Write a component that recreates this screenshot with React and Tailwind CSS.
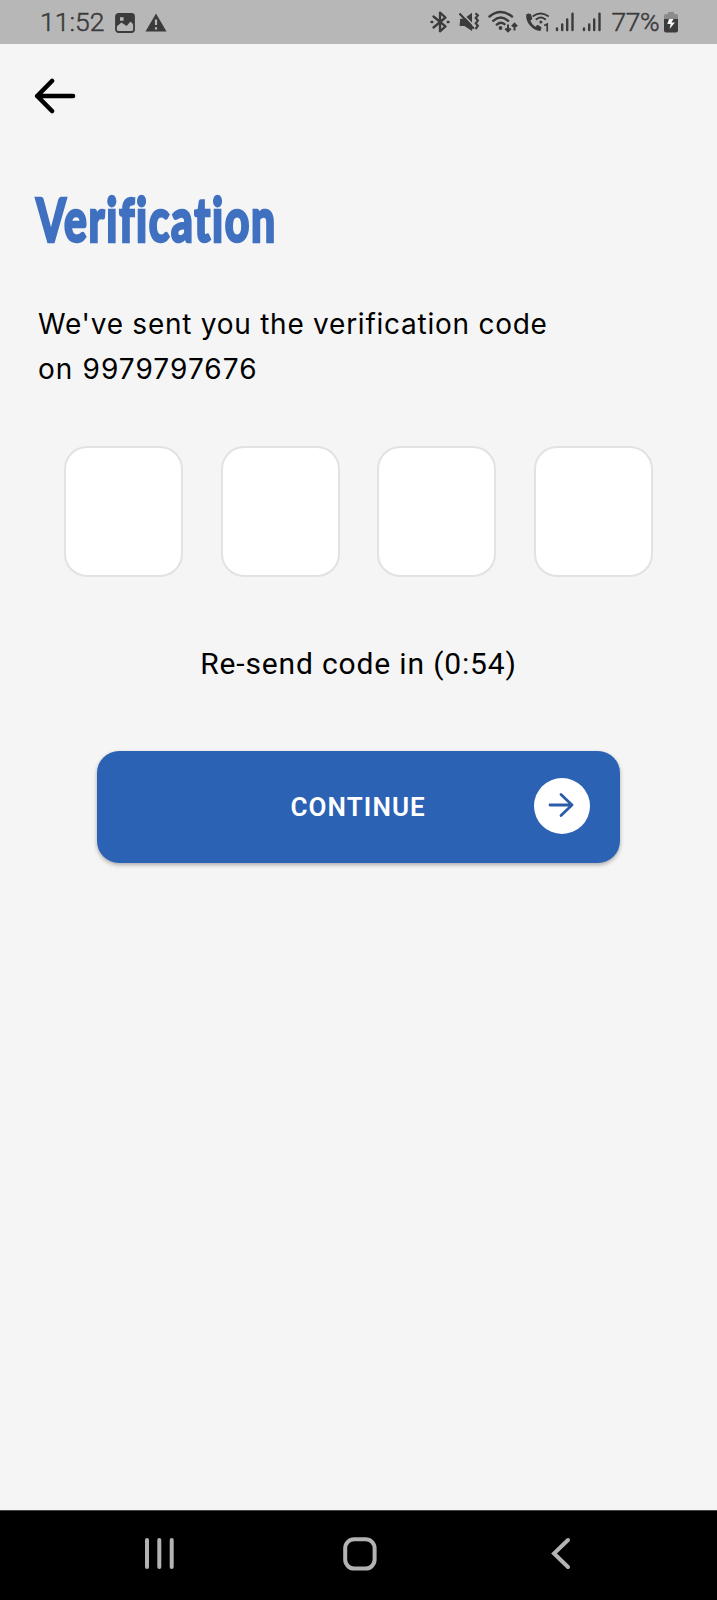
import React from 'react';

const SignalIcon = ({ className }) => (
    <svg viewBox="0 0 20 20" className={className} stroke="#3b3b3b" strokeWidth="2.4" strokeLinecap="round">
        <path d="M2 18v-1.5M7.2 18v-5.5M12.2 18V7.5M17.5 18V1.8" />
    </svg>
);

const StatusBar = () => (
    <div className="h-11 bg-[#b7b7b7] text-[#3b3b3b] flex items-start pl-[40px] font-[Roboto,sans-serif] shrink-0">
        <span className="w-[75px] pt-[2px] text-[26.5px] leading-10 whitespace-nowrap font-light [-webkit-text-stroke:0.5px_#3b3b3b]">11:52</span>
        <svg viewBox="0 0 20 20" className="w-5 h-5 mt-[12.5px]">
            <rect x="1" y="1" width="18" height="18" rx="2.5" fill="none" stroke="#3b3b3b" strokeWidth="1.8" />
            <path fillRule="evenodd" fill="#3b3b3b" d="M1 3Q1 1 3 1H17Q19 1 19 3V12L15.5 8.5L11.5 13L6.5 9.5L1 14ZM5 4.2V7.8H8.6V4.2Z" />
        </svg>
        <svg viewBox="0 0 22 19" className="w-[22px] h-[19px] mt-[12.5px] ml-[10px]">
            <path d="M11 .5L21.5 18.5H.5Z" fill="#3b3b3b" />
            <path d="M11 6.5V12M11 14.2V16.5" stroke="#b7b7b7" strokeWidth="2.2" />
        </svg>

        <svg viewBox="0 0 20 22" className="w-5 h-[22px] mt-[11px] ml-[263px]" fill="none" stroke="#3b3b3b" strokeWidth="2.3" strokeLinejoin="round" strokeLinecap="round">
            <path d="M3.5 5.5L15.5 15.3L10 20.3V1.7L15.5 6.5L3.5 16.5" />
            <path d="M1.6 11h.6M17.8 11h.6" strokeWidth="2.6" />
        </svg>
        <svg viewBox="0 0 21 20" className="w-[21px] h-5 mt-3 ml-[8.5px]">
            <path d="M1.2 6.7H5L13 .8V19L5.5 14H.6Z" fill="#3b3b3b" />
            <path d="M1.8 0L17 16" stroke="#b7b7b7" strokeWidth="1.6" />
            <path d="M.5 1.5L14.8 16.8" stroke="#3b3b3b" strokeWidth="2.1" />
            <path d="M16.5 1.2l2.4 2.2-2.2 2.6 2.2 2.6-2.2 2.6 2.2 2.6-2.4 3.2" stroke="#3b3b3b" strokeWidth="2.1" fill="none" />
        </svg>
        <svg viewBox="0 0 30 23" className="w-[30px] h-[23px] mt-[10px] ml-2" fill="none" stroke="#3b3b3b" strokeWidth="2.4" strokeLinecap="round">
            <path d="M1.5 6.5Q12.5-2.5 24 6.5M5.2 10.8Q12.7 4.2 20.2 10.8M8.8 14.6Q12.7 11 16.5 14.2" />
            <circle cx="12.5" cy="18" r="1.9" fill="#3b3b3b" stroke="none" />
            <path d="M20 14.5V21M17.3 18.5l2.7 2.8 2.7-2.8M26.5 20.5V14M23.9 16.4l2.6-2.7 2.6 2.7" strokeWidth="2" strokeLinecap="butt" />
        </svg>
        <svg viewBox="0 0 25 22" className="w-[25px] h-[22px] mt-[11px] ml-[7.5px]" fill="none" stroke="#3b3b3b">
            <path d="M1.2 3.5Q.5 9.5 5 14.5T15.3 20Q16.8 18.5 16.3 16L12.5 13.7L10.3 15.7Q6.8 13.6 5.4 9.7L7.4 7.8L5.8 3Q3.3 1.8 1.2 3.5Z" fill="#3b3b3b" stroke="none" />
            <path d="M8.3 5Q15.5.2 23 5M11.5 8.2Q15.7 5 20.2 8.2" strokeWidth="2" strokeLinecap="round" />
            <circle cx="15.9" cy="10.9" r="1.5" fill="#3b3b3b" stroke="none" />
            <path d="M19.2 14.6L22.2 13.2V20.6" strokeWidth="1.7" />
        </svg>
        <SignalIcon className="w-5 h-5 mt-3 ml-[5px]" />
        <SignalIcon className="w-5 h-5 mt-3 ml-[7px]" />
        <span className="w-[54px] ml-[9.5px] pt-[2px] text-[26.5px] leading-10 whitespace-nowrap tracking-[-0.4px] font-light [-webkit-text-stroke:0.5px_#3b3b3b]">77%</span>
        <svg viewBox="0 0 14 21" className="w-3.5 h-[21px] mt-[11.5px] -ml-[2px]">
            <path d="M4 0H10V2H12Q14 2 14 4V8H0V4Q0 2 2 2H4Z" fill="#8a8a8a" />
            <path d="M0 7H14V18.5Q14 20.5 12 20.5H2Q0 20.5 0 18.5Z" fill="#3b3b3b" />
            <path d="M5 7L3.3 12H6.6L5.6 17L10.9 10.6H7.6L9.4 7Z" fill="#f5f5f5" />
        </svg>
    </div>
);

const CodeInputs = () => (
    <div className="flex justify-between mt-[54px] mx-16">
        {[0, 1, 2, 3].map((i) => (
            <div key={i} className="w-[119px] h-[131px] rounded-[23px] border-2 border-[#e2e2e2] bg-white"></div>
        ))}
    </div>
);

const NavBar = () => (
    <div className="h-[90px] bg-black border-t border-[#444] flex shrink-0 pt-[26px] pl-[144px]">
        <svg viewBox="0 0 31 34" className="w-[31px] h-[34px]" stroke="#b3b3b3" strokeWidth="4" strokeLinecap="round">
            <path d="M3 3V30M15.3 3V30M27.7 3V30" />
        </svg>
        <svg viewBox="0 0 34 34" className="w-[34px] h-[34px] ml-[168px]" fill="none" stroke="#b3b3b3" strokeWidth="4">
            <rect x="2.2" y="2.2" width="29.4" height="29.4" rx="9" />
        </svg>
        <svg viewBox="0 0 20 34" className="w-5 h-[34px] ml-[174px]" fill="none" stroke="#b3b3b3" strokeWidth="4" strokeLinecap="round">
            <path d="M17 3L3 16.5L17 30" />
        </svg>
    </div>
);

const App = () => {
    return (
        <div className="h-[1600px] w-[717px] bg-[#f5f5f5] flex flex-col overflow-hidden text-black">
            <StatusBar />
            <div className="flex-1">
                <svg viewBox="0 0 42 36" className="w-[42px] h-9 mt-[34px] ml-[34px]" fill="none" stroke="black" strokeWidth="4.6" strokeLinecap="round" strokeLinejoin="round">
                    <path d="M39 18H3.2M18 3L3.2 18L18 33" />
                </svg>
                <h1 className="mt-[65px] ml-[36px] h-[80px] leading-[80px] text-[61px] font-black font-[Lato,sans-serif] text-[#4070c0] origin-left scale-x-[0.7] whitespace-nowrap w-[345px] [font-variant-ligatures:none] tracking-[2.3px] [-webkit-text-stroke:2.5px_#4070c0]">Verification</h1>
                <div className="mt-[43px] ml-[38px] text-[28px] leading-[45px] font-[Inter,sans-serif] whitespace-nowrap">
                    <p className="tracking-[0.75px]">We've sent you the verification code</p>
                    <p className="tracking-[1.08px]">on 9979797676</p>
                </div>
                <CodeInputs />
                <p className="mt-[67px] text-center text-[30px] leading-[40px] font-[Roboto,sans-serif] tracking-[0.85px]">Re-send code in (0:54)</p>
                <button className="mt-[67px] ml-[97px] w-[523px] h-28 rounded-[22px] bg-[#2c62b4] text-white flex items-center shadow-[0_2px_4px_rgba(0,0,0,0.3)] pr-[30px]">
                    <span className="ml-[193.5px] text-[26px] leading-none font-semibold font-[Roboto,sans-serif] tracking-[1.1px]">CONTINUE</span>
                    <span className="ml-auto mb-[2px] w-14 h-14 rounded-full bg-white flex items-center justify-center">
                        <svg viewBox="0 0 26 26" className="w-[26px] h-[26px] -mt-[2px] -ml-[2px]" fill="none" stroke="#2c5ca8" strokeWidth="2.8" strokeLinecap="round" strokeLinejoin="round">
                            <path d="M2 13H24M13 2.5L24 13L13 23.5" />
                        </svg>
                    </span>
                </button>
            </div>
            <NavBar />
        </div>
    );
};

export default App;
